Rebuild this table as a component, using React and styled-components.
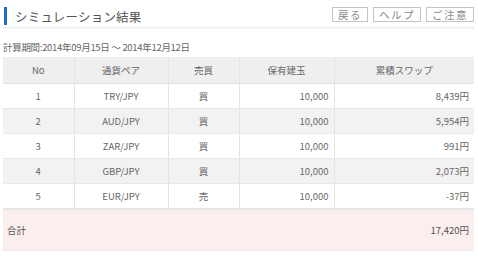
import React from 'react'
import styled, { createGlobalStyle } from 'styled-components'

const Global = createGlobalStyle`
  body {
    margin: 0;
    background: #fff;
    font-family: "Noto Sans CJK JP", "Noto Sans", sans-serif;
    color: #666;
  }
`

const Page = styled.div`
  width: 478px;
  padding: 6px 4px 0 3px;
  box-sizing: border-box;
`

const Header = styled.div`
  display: flex;
  align-items: center;
  justify-content: space-between;
  height: 20px;
  padding-bottom: 1px;
  border-bottom: 1px solid #ececec;
  box-shadow: 0 1px 0 #f6f6f6;
`

const Title = styled.h1`
  margin: 0;
  height: 18px;
  display: flex;
  align-items: center;
  padding-left: 8px;
  margin-left: 1px;
  border-left: 3px solid #1a6fc0;
  font-size: 12.5px;
  font-weight: normal;
  color: #555;
  letter-spacing: 0.2px;
`

const Buttons = styled.div`
  display: flex;
  gap: 5px;
  align-self: flex-start;
  margin-top: 1px;
`

const Button = styled.button`
  font-family: inherit;
  font-size: 10.5px;
  color: #888;
  background: #fff;
  border: 1px solid #c4c4c4;
  height: 15px;
  padding: 0 5px;
  line-height: 13px;
  letter-spacing: 1.5px;
`

const Period = styled.div`
  margin-top: 13px;
  font-size: 9.5px;
  color: #666;
  height: 13px;
  line-height: 13px;
  letter-spacing: -0.3px;
`

const Table = styled.table`
  margin-top: 3px;
  width: 471px;
  border-collapse: collapse;
  font-size: 9.5px;
  color: #666;
`

const Th = styled.th`
  background: #efefef;
  font-weight: normal;
  height: 26px;
  padding: 0;
  border-bottom: 1px solid #e2e2e2;
  border-left: 1px solid #e4e4e4;
  &:first-child { border-left: none; }
`

const Tr = styled.tr`
  background: ${p => (p.$alt ? '#f2f2f2' : '#fff')};
`

const Td = styled.td`
  height: 24px;
  padding: 0 ${p => (p.$align === 'right' ? '5px' : '0')};
  text-align: ${p => p.$align || 'center'};
  border-bottom: 1px solid #e8e8e8;
  border-left: 1px solid #e4e4e4;
  &:first-child { border-left: none; }
`

const TotalRow = styled.tr`
  background: #fbeeee;
`

const TotalCell = styled.td`
  height: 40px;
  padding: 0 5px 0 4px;
  text-align: ${p => p.$align || 'left'};
  border-top: 2px solid #e6e6e6;
  border-bottom: 1px solid #ececec;
  color: #555;
`

const rows = [
  ['1', 'TRY/JPY', '買', '10,000', '8,439円'],
  ['2', 'AUD/JPY', '買', '10,000', '5,954円'],
  ['3', 'ZAR/JPY', '買', '10,000', '991円'],
  ['4', 'GBP/JPY', '買', '10,000', '2,073円'],
  ['5', 'EUR/JPY', '売', '10,000', '-37円'],
]

export default function App() {
  return (
    <Page>
      <Global />
      <Header>
        <Title>シミュレーション結果</Title>
        <Buttons>
          <Button>戻る</Button>
          <Button>ヘルプ</Button>
          <Button>ご注意</Button>
        </Buttons>
      </Header>
      <Period>計算期間:2014年09月15日 〜 2014年12月12日</Period>
      <Table>
        <colgroup>
          <col style={{ width: 71 }} />
          <col style={{ width: 94 }} />
          <col style={{ width: 71 }} />
          <col style={{ width: 95 }} />
          <col />
        </colgroup>
        <thead>
          <tr>
            <Th>No</Th>
            <Th>通貨ペア</Th>
            <Th>売買</Th>
            <Th>保有建玉</Th>
            <Th>累積スワップ</Th>
          </tr>
        </thead>
        <tbody>
          {rows.map((r, i) => (
            <Tr key={r[0]} $alt={i % 2 === 1}>
              <Td>{r[0]}</Td>
              <Td>{r[1]}</Td>
              <Td>{r[2]}</Td>
              <Td $align="right">{r[3]}</Td>
              <Td $align="right">{r[4]}</Td>
            </Tr>
          ))}
          <TotalRow>
            <TotalCell colSpan={4}>合計</TotalCell>
            <TotalCell $align="right">17,420円</TotalCell>
          </TotalRow>
        </tbody>
      </Table>
    </Page>
  )
}
